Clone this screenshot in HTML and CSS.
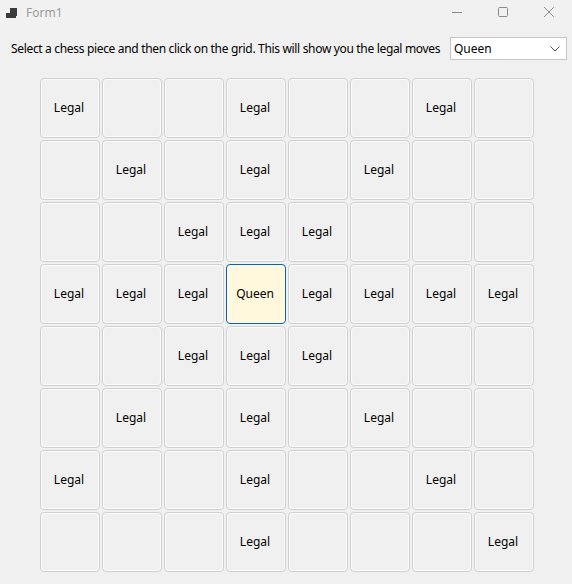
FILE: index.html
```html
<!DOCTYPE html>
<html>
<head>
<meta charset="utf-8">
<link rel="stylesheet" href="styles.css">
</head>
<body>
<div class="window">
  <div class="titlebar">
    <svg class="app-icon" width="12" height="11" viewBox="0 0 12 11">
      <rect x="0" y="5" width="4" height="5" fill="#3b3b3b"/>
      <rect x="4" y="0" width="7" height="8" fill="#3b3b3b"/>
      <rect x="4" y="8" width="6" height="2" fill="#3b3b3b"/>
    </svg>
    <span class="title">Form1</span>
    <div class="caption-buttons">
      <span class="cap">
        <svg width="12" height="12" viewBox="0 0 12 12"><line x1="1" y1="6.5" x2="11" y2="6.5" stroke="#8a8a8a" stroke-width="1"/></svg>
      </span>
      <span class="cap">
        <svg width="12" height="12" viewBox="0 0 12 12"><rect x="1.5" y="1.5" width="9" height="9" rx="1" fill="none" stroke="#8a8a8a" stroke-width="1"/></svg>
      </span>
      <span class="cap">
        <svg width="12" height="12" viewBox="0 0 12 12"><path d="M1 1 L11 11 M11 1 L1 11" stroke="#8a8a8a" stroke-width="1"/></svg>
      </span>
    </div>
  </div>
  <div class="toolbar">
    <span class="label">Select a chess piece and then click on the grid. This will show you the legal moves</span>
    <div class="combo">
      <span class="combo-text">Queen</span>
      <svg class="chev" width="10" height="6" viewBox="0 0 10 6"><path d="M0.5 0.5 L5 5 L9.5 0.5" fill="none" stroke="#555" stroke-width="1"/></svg>
    </div>
  </div>
  <div class="board">
    <div class="cell">Legal</div><div class="cell"></div><div class="cell"></div><div class="cell">Legal</div><div class="cell"></div><div class="cell"></div><div class="cell">Legal</div><div class="cell"></div>
    <div class="cell"></div><div class="cell">Legal</div><div class="cell"></div><div class="cell">Legal</div><div class="cell"></div><div class="cell">Legal</div><div class="cell"></div><div class="cell"></div>
    <div class="cell"></div><div class="cell"></div><div class="cell">Legal</div><div class="cell">Legal</div><div class="cell">Legal</div><div class="cell"></div><div class="cell"></div><div class="cell"></div>
    <div class="cell">Legal</div><div class="cell">Legal</div><div class="cell">Legal</div><div class="cell piece">Queen</div><div class="cell">Legal</div><div class="cell">Legal</div><div class="cell">Legal</div><div class="cell">Legal</div>
    <div class="cell"></div><div class="cell"></div><div class="cell">Legal</div><div class="cell">Legal</div><div class="cell">Legal</div><div class="cell"></div><div class="cell"></div><div class="cell"></div>
    <div class="cell"></div><div class="cell">Legal</div><div class="cell"></div><div class="cell">Legal</div><div class="cell"></div><div class="cell">Legal</div><div class="cell"></div><div class="cell"></div>
    <div class="cell">Legal</div><div class="cell"></div><div class="cell"></div><div class="cell">Legal</div><div class="cell"></div><div class="cell"></div><div class="cell">Legal</div><div class="cell"></div>
    <div class="cell"></div><div class="cell"></div><div class="cell"></div><div class="cell">Legal</div><div class="cell"></div><div class="cell"></div><div class="cell"></div><div class="cell">Legal</div>
  </div>
</div>
</body>
</html>
```
FILE: styles.css
```css
html, body {
  margin: 0;
  padding: 0;
  background: #f0f0f0;
}
.window {
  width: 572px;
  height: 584px;
  font-family: "Noto Sans", "Open Sans", sans-serif;
  font-size: 12px;
  color: #000;
  overflow: hidden;
}
.titlebar {
  height: 25px;
  display: flex;
  align-items: center;
  background: #f1f1f1;
}
.app-icon {
  margin-left: 6px;
  margin-top: 1px;
}
.title {
  margin-left: 8px;
  color: #9a9a9a;
  font-size: 12px;
  margin-top: -1px;
}
.caption-buttons {
  margin-left: auto;
  display: flex;
  margin-top: -1px;
}
.cap {
  width: 46px;
  display: flex;
  justify-content: center;
}
.toolbar {
  display: flex;
  align-items: center;
  padding: 12px 5px 0 11px;
  height: 23px;
}
.label {
  flex: none;
  white-space: nowrap;
  letter-spacing: -0.33px;
}
.combo {
  flex: none;
  margin-left: auto;
  width: 106px;
  height: 21px;
  border: 1px solid #c6c6c6;
  background: #fff;
  display: flex;
  align-items: center;
  padding: 0 6px 0 3px;
}
.combo-text {
  flex: 1;
}
.chev {
  margin-top: 1px;
}
.board {
  display: grid;
  grid-template-columns: repeat(8, 60px);
  grid-auto-rows: 60px;
  gap: 2px;
  margin: 18px 0 0 40px;
}
.cell {
  box-sizing: border-box;
  border: 1px solid #d0d0d0;
  border-radius: 4px;
  box-shadow: inset 0 0 0 1px #fbfbfb;
  background: #f0f0f0;
  display: flex;
  align-items: center;
  justify-content: center;
  padding: 0 2px 2px 0;
}
.cell.piece {
  border-color: #0067c0;
  background: #fff8dc;
  box-shadow: none;
}
```
